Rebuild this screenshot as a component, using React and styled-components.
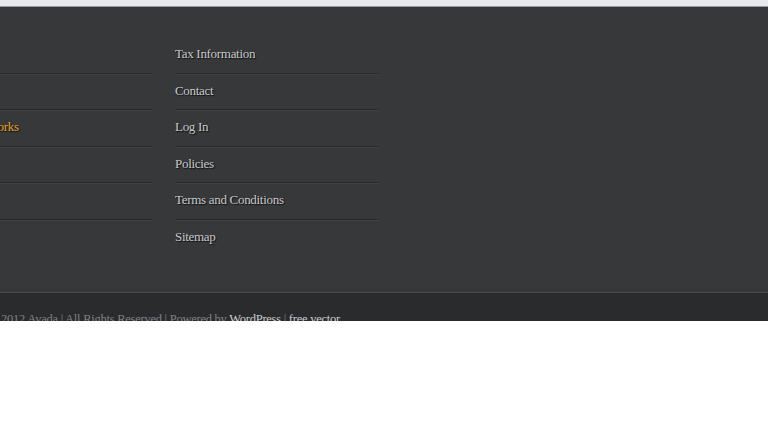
import styled, { createGlobalStyle } from 'styled-components'

const GlobalStyle = createGlobalStyle`
  html, body {
    margin: 0;
    padding: 0;
    background: #ffffff;
  }
  body {
    font-family: "Liberation Serif", "Times New Roman", serif;
  }
`

const Page = styled.div`
  width: 768px;
  display: flex;
  flex-direction: column;
  overflow: hidden;
`

const TopStrip = styled.div`
  height: 6px;
  background: #e8e9ed;
  border-bottom: 1px solid #9b9c9f;
`

const FooterWidgets = styled.div`
  background: #37383a;
  padding: 30px 0 36px;
  border-bottom: 1px solid #4a4b4d;
`

const Columns = styled.div`
  display: grid;
  grid-template-columns: 202px 203px;
  column-gap: 23px;
  margin-left: -50px;
`

const LinkList = styled.ul`
  list-style: none;
  margin: 0;
  padding: 0;
`

const LinkItem = styled.li`
  font-size: 13px;
  padding: 10px 0 11.5px;
  line-height: 14px;
  border-bottom: 1px solid ${p => (p.$last ? 'transparent' : '#262729')};
  box-shadow: ${p => (p.$last ? 'none' : '0 1px 0 #414244')};
`

const FooterLink = styled.a`
  font-size: 13px;
  letter-spacing: -0.3px;
  color: ${p => (p.$active ? '#eba526' : '#c8c9cd')};
  text-shadow: 1px 1px 1px #0c0d0e;
  text-decoration: none;
  white-space: nowrap;
`

const CopyrightBar = styled.div`
  height: 28px;
  background: #2a2b2d;
  overflow: hidden;
`

const CopyrightText = styled.p`
  margin: 0 0 0 -11px;
  padding-top: 19px;
  line-height: 15px;
  font-size: 12.5px;
  letter-spacing: -0.25px;
  color: #808184;
  white-space: nowrap;
`

const CopyLink = styled.a`
  color: #cbccd0;
  text-decoration: none;
`

const leftLinks = [
  { label: 'Home' },
  { label: 'Overview' },
  { label: 'How it Works', active: true },
  { label: 'Blog' },
  { label: 'FAQ' },
  { label: 'Shop' },
]

const rightLinks = [
  { label: 'Tax Information' },
  { label: 'Contact' },
  { label: 'Log In' },
  { label: 'Policies' },
  { label: 'Terms and Conditions' },
  { label: 'Sitemap' },
]

const LinkColumn = ({ links }) => (
  <LinkList>
    {links.map((link, i) => (
      <LinkItem key={link.label} $last={i === links.length - 1}>
        <FooterLink href="#" $active={link.active}>{link.label}</FooterLink>
      </LinkItem>
    ))}
  </LinkList>
)

export default function App() {
  return (
    <>
      <GlobalStyle />
      <Page>
        <TopStrip />
        <FooterWidgets>
          <Columns>
            <LinkColumn links={leftLinks} />
            <LinkColumn links={rightLinks} />
          </Columns>
        </FooterWidgets>
        <CopyrightBar>
          <CopyrightText>
            © 2012 Avada | All Rights Reserved | Powered by <CopyLink href="#">WordPress</CopyLink> | <CopyLink href="#">free vector</CopyLink>
          </CopyrightText>
        </CopyrightBar>
      </Page>
    </>
  )
}
